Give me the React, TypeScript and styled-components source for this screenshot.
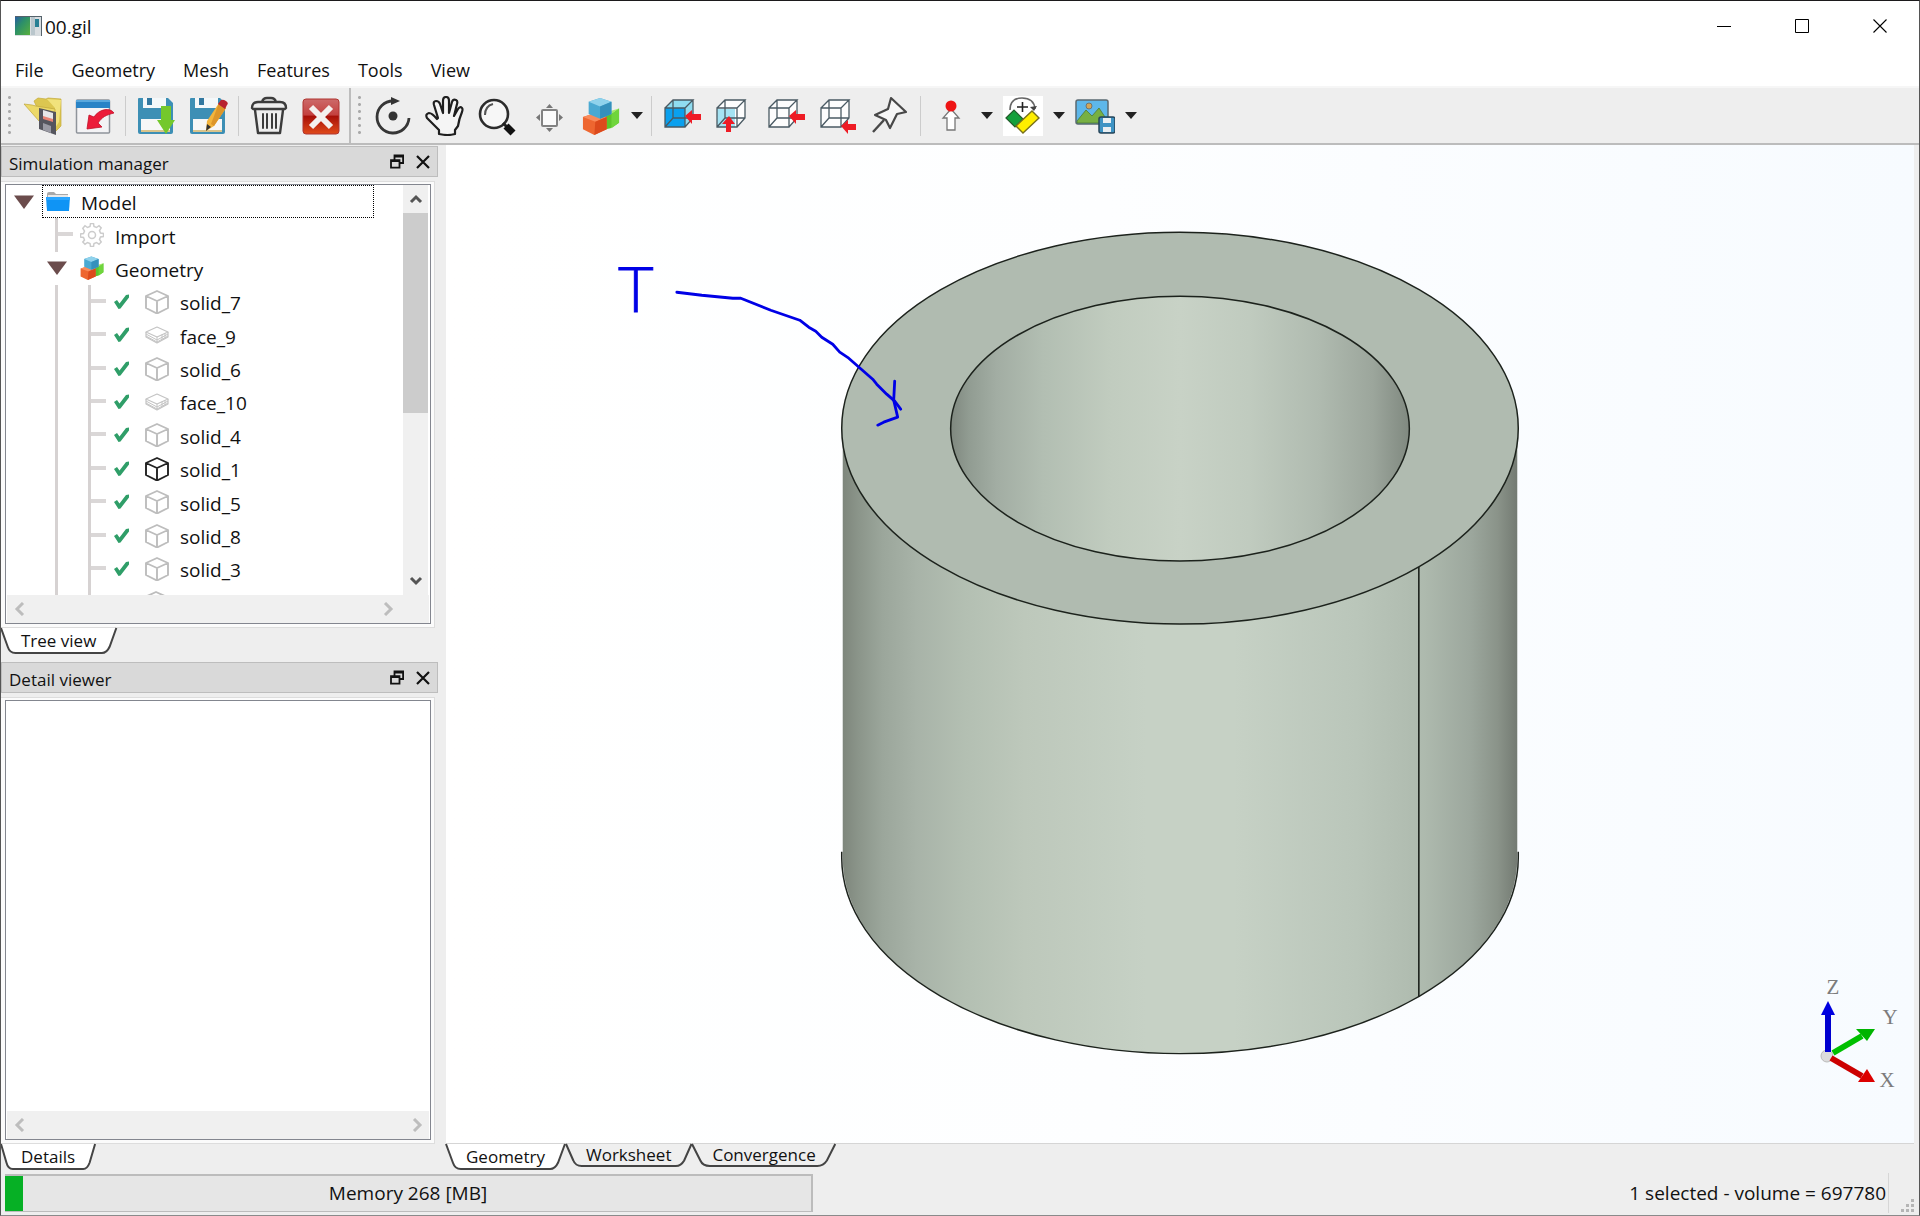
import React from "react";
import styled, { createGlobalStyle, css } from "styled-components";

const GlobalStyle = createGlobalStyle`
  *, *::before, *::after { box-sizing: border-box; }
  body {
    margin: 0;
    background: #eeeeee;
    color: #111111;
    font-family: "Open Sans", "Noto Sans", sans-serif;
    font-size: 19px;
    line-height: 24px;
  }
  button { font: inherit; color: inherit; }
  svg { display: block; }
`;

/* ---------- window frame ---------- */

const Window = styled.div`
  display: flex;
  flex-direction: column;
  height: 100vh;
  border: 1px solid #555555;
  border-top-color: #1c1a1c;
  border-bottom-color: #8a8a8a;
  overflow: hidden;
`;

const TitleBar = styled.header`
  display: flex;
  align-items: center;
  height: 50px;
  flex: none;
  padding-left: 14px;
  background: #ffffff;
`;

const WindowTitle = styled.h1`
  flex: 1;
  margin: 0;
  padding: 2px 0 0 3px;
  font-size: 19px;
  font-weight: 400;
  line-height: 24px;
`;

const BareButton = styled.button`
  display: flex;
  align-items: center;
  justify-content: center;
  padding: 0;
  border: 0;
  background: transparent;
`;

const WindowControl = styled(BareButton)`
  width: 78px;
  height: 48px;
`;

const MenuBar = styled.nav`
  display: flex;
  align-items: center;
  gap: 28px;
  height: 37px;
  flex: none;
  padding: 2px 14px 0;
  background: #ffffff;
  border-bottom: 2px solid #f6f6f6;
`;

const MenuButton = styled(BareButton)`
  font-size: 18px;
  line-height: 24px;
`;

/* ---------- toolbar ---------- */

const ToolBars = styled.div`
  display: flex;
  height: 57px;
  flex: none;
  background: #eeeeee;
  border-bottom: 2px solid #bcbcbc;
`;

const ToolGroup = styled.div<{ $divided?: boolean }>`
  display: flex;
  align-items: center;
  padding-left: 16px;
  position: relative;
  ${(p) => p.$divided && css`border-right: 2px solid #bdbdbd; padding-right: 2px;`}
  &::before {
    content: "";
    position: absolute;
    left: 7px;
    top: 6px;
    bottom: 5px;
    width: 3px;
    background: radial-gradient(circle, #aaaaaa 1px, transparent 2px) 0 0 / 3px 7px;
  }
`;

const ToolButton = styled(BareButton)`
  width: 52px;
  height: 48px;
`;

const DropButton = styled(BareButton)`
  width: 20px;
  height: 48px;
`;

const ToolSeparator = styled.span`
  width: 1px;
  height: 40px;
  margin: 0 4px;
  background: #cccccc;
`;

/* ---------- docks ---------- */

const Workspace = styled.main`
  display: flex;
  flex: 1;
  min-height: 0;
`;

const DockColumn = styled.aside`
  display: flex;
  flex-direction: column;
  width: 437px;
  flex: none;
  padding-top: 1px;
`;

const Dock = styled.section<{ $fill?: boolean }>`
  display: flex;
  flex-direction: column;
  ${(p) => (p.$fill ? css`flex: 1; min-height: 0;` : css`height: 508px; flex: none; margin-bottom: 8px;`)}
`;

const DockHeader = styled.header`
  display: flex;
  align-items: center;
  height: 31px;
  flex: none;
  padding: 0 1px 0 7px;
  background: #d9d9d9;
  border: 1px solid #bdbdbd;
`;

const DockTitle = styled.h2`
  flex: 1;
  margin: 0;
  padding-top: 4px;
  font-size: 17px;
  font-weight: 400;
  line-height: 24px;
`;

const DockAction = styled(BareButton)`
  width: 26px;
  height: 28px;
`;

const DockBody = styled.div`
  display: flex;
  flex: 1;
  min-height: 0;
  margin: 4px 3px 0 0;
  padding: 2px 3px 3px 4px;
  background: #fbfbfb;
  border: solid #dddddd;
  border-width: 1px 1px 1px 0;
`;

const ScrollFrame = styled.div`
  display: flex;
  flex-direction: column;
  flex: 1;
  min-width: 0;
  background: #ffffff;
  border: 1px solid #83868f;
`;

const ScrollRow = styled.div`
  display: flex;
  flex: 1;
  min-height: 0;
`;

const VerticalBar = styled.div`
  display: flex;
  flex-direction: column;
  width: 25px;
  margin-right: 2px;
  background: #f0f0f0;
`;

const VerticalThumb = styled.div`
  height: 200px;
  background: #cccccc;
`;

const Spacer = styled.div`
  flex: 1;
`;

const ArrowButton = styled(BareButton)`
  width: 25px;
  height: 28px;
  flex: none;
`;

const HorizontalBar = styled.div<{ $corner?: boolean }>`
  display: flex;
  align-items: center;
  justify-content: space-between;
  height: 28px;
  flex: none;
  margin: 0 1px;
  padding-right: ${(p) => (p.$corner ? "29px" : "0")};
  background: #f0f0f0;
`;

/* ---------- tabs ---------- */

const TabStrip = styled.div`
  display: flex;
  align-items: flex-start;
  gap: 1px;
  height: 26px;
  flex: none;
`;

const Tab = styled.button<{ $active?: boolean }>`
  position: relative;
  isolation: isolate;
  padding: 0 20px;
  border: 0;
  background: transparent;
  font-size: 17px;
  line-height: ${(p) => (p.$active ? "25px" : "22px")};
  & > svg {
    position: absolute;
    inset: 0;
    z-index: -1;
    width: 100%;
    height: 100%;
    overflow: visible;
  }
`;

/* ---------- tree ---------- */

const Tree = styled.ul`
  flex: 1;
  min-width: 0;
  margin: 0;
  padding: 0 0 0 1px;
  overflow: hidden;
  list-style: none;
`;

const TreeRows = styled.div`
  display: grid;
  grid-auto-rows: 1fr;
  height: 434px;
`;

const TreeRow = styled.li`
  display: flex;
  align-items: stretch;
`;

const Branch = styled.span<{ $line?: boolean; $stub?: boolean }>`
  position: relative;
  display: flex;
  align-items: center;
  justify-content: center;
  width: 33px;
  flex: none;
  ${(p) =>
    p.$line &&
    css`
      background: linear-gradient(#d6d2d2, #d6d2d2) 15px 0 / 3px 100% no-repeat;
    `}
  ${(p) =>
    p.$stub &&
    css`
      &::after {
        content: "";
        width: 15px;
        height: 4px;
        margin-left: 18px;
        margin-bottom: 2px;
        background: #dad7d7;
      }
    `}
`;

const NodeLabel = styled.span<{ $focused?: boolean }>`
  display: flex;
  align-items: center;
  gap: 11px;
  margin-left: 3px;
  padding: 0 3px;
  border: 1px dotted transparent;
  ${(p) => p.$focused && css`width: 332px; margin-left: 2px; border-color: #000000;`}
`;

const LeafLabel = styled.span`
  display: flex;
  align-items: center;
  padding-left: 8px;
  & > svg + svg { margin-left: 16px; }
  & > span { margin-left: 11px; }
`;

const PeekLabel = styled.span`
  padding: 5px 0 0 38px;
`;

const NodeText = styled.span`
  padding-top: 3px;
  font-size: 19px;
  line-height: 24px;
`;

/* ---------- viewport ---------- */

const ViewColumn = styled.section`
  display: flex;
  flex-direction: column;
  flex: 1;
  min-width: 0;
  margin-left: 8px;
  padding-right: 5px;
`;

const Viewport = styled.div`
  position: relative;
  flex: 1;
  min-height: 0;
  background: linear-gradient(90deg, #ffffff 0%, #fdfeff 45%, #f7fbff 100%);
  border-bottom: 1px solid #d5d5d5;
`;

const Scene = styled.svg`
  width: 100%;
  height: 100%;
`;

const Triad = styled.svg`
  position: absolute;
  right: 0;
  bottom: 0;
`;

/* ---------- status bar ---------- */

const StatusBar = styled.footer`
  display: grid;
  grid-template-columns: 11fr 15fr;
  align-items: center;
  height: 45px;
  flex: none;
  padding: 0 4px;
`;

const MemoryBar = styled.div`
  position: relative;
  display: flex;
  align-items: center;
  justify-content: center;
  height: 38px;
  background: #e6e6e6;
  border: 1px solid #bcbcbc;
  border-width: 2px 2px 1px 0;
`;

const MemoryFill = styled.span`
  position: absolute;
  left: 0;
  top: 0;
  bottom: 0;
  background: #06b025;
`;

const StatusInfo = styled.div`
  display: flex;
  align-items: center;
  justify-content: flex-end;
  height: 40px;
  gap: 12px;
`;

const Selection = styled.output`
  padding-right: 2px;
  line-height: 40px;
  border-right: 1px solid #d6d6d6;
`;

const GripHolder = styled.span`
  align-self: flex-end;
`;

/* ---------- small drawings ---------- */

const AppIcon = () => (
  <svg width="27" height="20" viewBox="0 0 27 20" aria-hidden="true">
    <defs>
      <linearGradient id="appg" x1="0" y1="0" x2="1" y2="1">
        <stop offset="0" stopColor="#2b5ca0" />
        <stop offset="0.4" stopColor="#2c8f6a" />
        <stop offset="1" stopColor="#58b03c" />
      </linearGradient>
    </defs>
    <rect width="27" height="20" fill="#d8dde0" />
    <rect y="1" width="15" height="18" fill="url(#appg)" />
    <path d="M16 1h4v18h-4z" fill="#b9c6cc" />
    <path d="M20 3h4v8h-4z" fill="#287f93" />
    <path d="M0 .5h27M26.500 0v20" stroke="#55626b" />
  </svg>
);

const MinimizeGlyph = () => (
  <svg width="14" height="14" viewBox="0 0 14 14"><path d="M0 7.500h14" stroke="#000" /></svg>
);
const MaximizeGlyph = () => (
  <svg width="14" height="14" viewBox="0 0 14 14"><path d="M.5.5h13v13H.5z" fill="none" stroke="#000" /></svg>
);
const CloseGlyph = () => (
  <svg width="14" height="14" viewBox="0 0 14 14"><path d="M.5.5l13 13M13.500.5l-13 13" stroke="#000" strokeWidth="1.100" /></svg>
);

const FloatGlyph = () => (
  <svg width="14" height="15" viewBox="0 0 14 15" fill="none" stroke="#111" strokeWidth="1.800">
    <path d="M4.500 6V1.500h8.600v7.500H9.500M4.500 2.500h8.600M1 6.200h8.500v7.500H1zM1 7.200h8.500" />
  </svg>
);
const DockCloseGlyph = () => (
  <svg width="14" height="14" viewBox="0 0 14 14"><path d="M1 1l12 12M13 1L1 13" stroke="#111" strokeWidth="2.200" /></svg>
);

const paths = {
  up: "M2 10l5-5 5 5",
  down: "M2 4l5 5 5-5",
  left: "M10 1L4 7l6 6",
  right: "M4 1l6 6-6 6",
};
const Chevron = ({ dir, color }: { dir: keyof typeof paths; color: string }) => (
  <svg width="14" height="14" viewBox="0 0 14 14">
    <path d={paths[dir]} fill="none" stroke={color} strokeWidth="3" />
  </svg>
);

const DropGlyph = () => (
  <svg width="12" height="8" viewBox="0 0 12 8"><path d="M0 0h12L6 7z" fill="#222" /></svg>
);

const Expander = () => (
  <svg width="20" height="14" viewBox="0 0 20 14"><path d="M0 .5h20L10 14z" fill="#6b4c4c" /></svg>
);

const FolderIcon = () => (
  <svg width="24" height="22" viewBox="0 0 24 22">
    <path d="M1 3q0-2 2-2h5l2 2h12v5H1z" fill="#a9a9a9" />
    <path d="M2 4h20v4H2z" fill="#e8e8e8" />
    <path d="M0 6h24l-1 14H1z" fill="#0f94f5" />
    <path d="M0 6h24l-.3 3H.3z" fill="#2aa6ff" />
  </svg>
);

const GearIcon = () => (
  <svg width="24" height="24" viewBox="0 0 24 24" fill="none" stroke="#cccccc" strokeWidth="1.500">
    <path d="M10 3.500l.5-3h3l.5 3 2.500 1 2.500-1.800 2.200 2.200-1.700 2.600 1 2.500 3 .5v3l-3 .5-1 2.500 1.700 2.500-2.200 2.200-2.500-1.700-2.500 1-.5 3h-3l-.5-3-2.500-1-2.500 1.700-2.200-2.200L4.500 17l-1-2.500-3-.5v-3l3-.5 1-2.500-1.700-2.600L5 2.700l2.500 1.800z" />
    <circle cx="12" cy="12" r="3.500" />
  </svg>
);

const BlocksIcon = ({ size }: { size: number }) => (
  <svg width={size} height={size} viewBox="0 0 40 40">
    <path d="M20 20l12-3 7-5v15l-9 6-10 2z" fill="#5cc52c" />
    <path d="M20 20l9-5 10-3-8 6z" fill="#a5ea6a" />
    <path d="M31 18l8-6v15l-8 6z" fill="#6fd53c" />
    <path d="M1 21l12-4 13 4v13l-13 6-12-6z" fill="#ee6630" />
    <path d="M1 21l12-4 13 4-12 5z" fill="#f98b5b" />
    <path d="M14 26l12-5v13l-13 6z" fill="#dc4a1c" />
    <path d="M7 5l12-4 12 4v13l-12 5-12-5z" fill="#4aa9d2" />
    <path d="M7 5l12-4 12 4-12 5z" fill="#8fd2ec" />
    <path d="M19 10l12-5v13l-12 5z" fill="#3590bc" />
  </svg>
);

const TickIcon = () => (
  <svg width="15" height="16" viewBox="0 0 15 16">
    <path d="M0 8l3-2 2.500 3.500L12 1l3-.5v3L6.500 14.500l-2 .5z" fill="#2f9e68" />
  </svg>
);

const SolidIcon = ({ dark }: { dark?: boolean }) => (
  <svg width="24" height="24" viewBox="0 0 24 24" fill="none" stroke={dark ? "#222" : "#bdbdbd"} strokeWidth="1.900" strokeLinejoin="round">
    <path d="M12 1l11 5v12l-11 5.500L1 18V6zM1 6l11 5 11-5M12 11v12.500" />
  </svg>
);

const FaceIcon = () => (
  <svg width="24" height="24" viewBox="0 0 24 24" fill="none" stroke="#c4c4c4" strokeWidth="1.200" strokeLinejoin="round">
    <path d="M12 4l11 5-11 5L1 9z" />
    <path d="M1 9v5l11 6 11-6V9" />
    <path d="M1 11l11 6 11-6M1 13l11 6 11-6M12 14v6M17 11.500v5M20 10.500v5" strokeWidth="1" />
  </svg>
);

const Icon = ({ children }: { children: React.ReactNode }) => (
  <svg width="40" height="40" viewBox="0 0 40 40" aria-hidden="true">{children}</svg>
);

const OpenIcon = () => (
  <Icon>
    <path d="M11 5l4-3 8 1 2-1 13 1v27l-6 6-16-20z" fill="#dcc650" stroke="#c4ab3a" strokeWidth=".7" />
    <path d="M24 3l14 1-2 22-4 6V12z" fill="#f1e27c" />
    <path d="M1 8l8 1 4 1 19 3v12l-16 0z" fill="#ecd968" stroke="#bfa53a" strokeWidth=".7" />
    <path d="M16 12l17 4v23l-17-6z" fill="#55555e" />
    <path d="M20 14l10 3v8l-10-3z" fill="#e6e6e8" />
    <path d="M20 20l10 3v3l-10-3z" fill="#e78374" />
    <path d="M20 27l8 3v7l-8-3z" fill="#9a9aa4" />
  </Icon>
);

const ImportIcon = () => (
  <Icon>
    <rect x="1.500" y="4" width="33" height="33" rx="1" fill="#f3f3f5" stroke="#8f949b" strokeWidth="1.500" />
    <path d="M1 4h34v8H1z" fill="#2883c6" />
    <path d="M1 4h34v2H1z" fill="#59a8dd" />
    <path d="M39 17c-4-6-15-4-20 4l-5-2-2 14 15-2-4-4c4-6 8-8 16-10z" fill="#ec1c3a" stroke="#c01028" strokeWidth=".8" />
  </Icon>
);

const FloppyBase = () => (
  <>
    <path d="M2 3q0-1 1-1h29l5 5v29q0 2-2 2H4q-2 0-2-2z" fill="#3d8fb5" />
    <path d="M7 2h23v10H7z" fill="#f4f8fa" />
    <path d="M11 2h5v7h-5z" fill="#3278a0" />
    <path d="M5 23h29v12H5z" fill="#f7f7f7" />
    <path d="M5 34h29v2H5z" fill="#d9c48c" />
  </>
);
const SaveIcon = () => (
  <Icon>
    <FloppyBase />
    <path d="M25 10h10v14h4l-9 14-9-14h4z" fill="#74c82c" />
  </Icon>
);
const SaveAsIcon = () => (
  <Icon>
    <FloppyBase />
    <path d="M19 25l12-18 7 5-12 18-8 5z" fill="#f3b43c" />
    <path d="M31 7l7 5-12 18-3-2z" fill="#dd962a" />
    <path d="M30 8l3-4q2-1 5 1t1 4l-2 4z" fill="#b8232f" />
    <path d="M19 28l4 3-5 4z" fill="#333" />
  </Icon>
);
const TrashIcon = () => (
  <Icon>
    <g fill="none" stroke="#3c3c3c" strokeWidth="2.400" strokeLinejoin="round" strokeLinecap="round">
      <path d="M3 12q0-6 6-6h22q6 0 6 6l-1 1H4zM13 6q1-4 5-4h4q4 0 5 4M6 14l3 23h22l3-23" />
      <path d="M14 18v14M18 18v14M23 18v14M27 18v14" strokeWidth="2" />
    </g>
  </Icon>
);
const DeleteIcon = () => (
  <Icon>
    <defs>
      <linearGradient id="delg" x1="0" y1="0" x2="0" y2="1">
        <stop offset="0" stopColor="#cc6a6a" />
        <stop offset="0.45" stopColor="#c4413f" />
        <stop offset="0.5" stopColor="#a81008" />
        <stop offset="1" stopColor="#e04a1a" />
      </linearGradient>
    </defs>
    <rect x="2" y="3" width="36" height="35" rx="3" fill="url(#delg)" stroke="#b03530" />
    <path d="M10 11l20 20M30 11L10 31" stroke="#f4f0ee" strokeWidth="6" />
  </Icon>
);
const RotateIcon = () => (
  <Icon>
    <path d="M20 5A16 16 0 1 0 36 22" fill="none" stroke="#363636" strokeWidth="2.800" />
    <path d="M18 1l9 4-9 4z" fill="#333" />
    <circle cx="20" cy="20" r="4.500" fill="#333" />
  </Icon>
);
const PanIcon = () => (
  <Icon>
    <path
      d="M14 38v-4L2 22q-2-4 2-5 3 0 8 6l1-1L9 9q-1-4 2-4 3 0 4 3l3 9V5q0-4 3-4t3 4v12l3-11q1-3 4-2 2 1 1 4l-3 12 4-7q2-3 4-1 1 1 0 4-3 7-4 14l-3 4v4q-7 2-16 0z"
      fill="#fff" fillOpacity=".4" stroke="#1f1f1f" strokeWidth="2.200" strokeLinejoin="round"
    />
  </Icon>
);
const ZoomIcon = () => (
  <Icon>
    <circle cx="17" cy="18" r="14" fill="#f7f7f7" stroke="#2c2c2c" strokeWidth="2.600" />
    <path d="M8 19q0-9 8-11" fill="none" stroke="#555" strokeWidth="2" />
    <path d="M26 27l4 4" stroke="#222" strokeWidth="3" />
    <path d="M29 30l7 7" stroke="#111" strokeWidth="7" />
  </Icon>
);
const FitIcon = () => (
  <Icon>
    <rect x="13" y="14" width="15" height="16" rx="1" fill="#fbfbfb" stroke="#838383" strokeWidth="2" />
    <path d="M17 12l3.500-4 3.500 4zM17 32l3.500 4 3.500-4zM11 18l-4 3.500 4 3.500zM30 18l4 3.500-4 3.500z" fill="#777" />
  </Icon>
);

type WireProps = { fill?: string; top?: string; floor?: boolean; arrow: "side" | "below" | "corner" };
const WireCube = ({ fill = "none", top = "#fdfdfd", floor, arrow }: WireProps) => (
  <svg width="40" height="40" viewBox="-1 0 40 40" aria-hidden="true">
    <path d="M2 12l8-8h20v18l-8 9H2z" fill={top} />
    <path d="M2 12h20v19H2z" fill={fill} />
    {floor && <path d="M2 31V13h18v18z" fill="#8fdcf0" opacity=".8" />}
    <g fill="none" stroke="#4a5a63" strokeWidth="1.300">
      <path d="M2 12h20v19H2zM2 12l8-8h20l-8 8M30 4v18l-8 9M10 4v18h20M10 22l-8 9" />
    </g>
    {arrow === "side" && <path d="M22 20l7-6v4h9v6h-9v4z" fill="#ee1c25" />}
    {arrow === "below" && <path d="M14 20l6 8h-4v8h-5v-8H7z" fill="#ee1c25" />}
    {arrow === "corner" && <path d="M22 30l7-6v4h8v6h-8v4z" fill="#ee1c25" />}
  </svg>
);

const PinIcon = () => (
  <Icon>
    <path d="M21 2l15 14-9 2-7 14-4-8-11-5 13-6z" fill="#f6f6f6" stroke="#484848" strokeWidth="2.200" strokeLinejoin="round" />
    <path d="M14 24L3 36" stroke="#484848" strokeWidth="2.400" />
  </Icon>
);
const ProbeIcon = () => (
  <Icon>
    <path d="M20 13l8 9h-4v12h-8V22h-4z" fill="#fff" stroke="#777" strokeWidth="1.300" />
    <circle cx="20" cy="10" r="5.500" fill="#ee1414" />
  </Icon>
);
const PlaneIcon = () => (
  <Icon>
    <rect width="40" height="40" fill="#fff" />
    <path d="M7 14q0-12 12-12t13 11" fill="none" stroke="#666" strokeWidth="1.600" />
    <path d="M27 11l7-1-3 5z" fill="#444" />
    <path d="M3 22l8-8 9 9-8 8z" fill="#14a03c" stroke="#245c2c" strokeWidth="1.200" />
    <path d="M13 30l16-15 7 7-16 15z" fill="#ffee00" stroke="#77701c" strokeWidth="1.400" />
    <path d="M14 11h11M19.500 6v10" stroke="#222" strokeWidth="1.600" />
  </Icon>
);
const SnapshotIcon = () => (
  <Icon>
    <rect x="1" y="4" width="32" height="24" rx="2" fill="#5db7ea" stroke="#5a6a72" strokeWidth="1.500" />
    <path d="M2 25l9-11 6 6 7-8 8 12v3H2z" fill="#77b043" stroke="#4e7a35" strokeWidth=".8" />
    <circle cx="14" cy="10" r="3" fill="#d2a65a" stroke="#666" strokeWidth=".8" />
    <rect x="24" y="21" width="16" height="16" rx="2" fill="#3d93c4" stroke="#27465a" strokeWidth="1.500" />
    <path d="M28 22h8v5h-8zM28 31h8v5h-8z" fill="#e8eef2" />
  </Icon>
);

const GripGlyph = () => (
  <svg width="14" height="14" viewBox="0 0 14 14" fill="#b5b5b5">
    <path d="M10 0h3v3h-3zM10 5h3v3h-3zM5 5h3v3H5zM10 10h3v3h-3zM5 10h3v3H5zM0 10h3v3H0z" />
  </svg>
);

const TabShape = ({ active }: { active?: boolean }) => (
  <svg viewBox="0 0 120 24" preserveAspectRatio="none" aria-hidden="true">
    <path
      d="M0 0l7 18q2 6 8 6h90q5 0 8-6L120 0"
      fill={active ? "#ffffff" : "#efefef"}
      stroke="#444"
      strokeWidth="2"
      vectorEffect="non-scaling-stroke"
    />
  </svg>
);

/* ---------- data ---------- */

const menus = ["File", "Geometry", "Mesh", "Features", "Tools", "View"];
const leaves = ["solid_7", "face_9", "solid_6", "face_10", "solid_4", "solid_1", "solid_5", "solid_8", "solid_3"];

const Tool = ({ label, children }: { label: string; children: React.ReactNode }) => (
  <ToolButton type="button" aria-label={label}>{children}</ToolButton>
);
const Drop = ({ label }: { label: string }) => (
  <DropButton type="button" aria-label={label}><DropGlyph /></DropButton>
);

const DockTop = ({ title }: { title: string }) => (
  <DockHeader>
    <DockTitle>{title}</DockTitle>
    <DockAction type="button" aria-label="Float"><FloatGlyph /></DockAction>
    <DockAction type="button" aria-label="Close"><DockCloseGlyph /></DockAction>
  </DockHeader>
);

const HScroll = ({ corner }: { corner?: boolean }) => (
  <HorizontalBar $corner={corner}>
    <ArrowButton type="button" aria-label="Scroll left"><Chevron dir="left" color="#bdbdbd" /></ArrowButton>
    <ArrowButton type="button" aria-label="Scroll right"><Chevron dir="right" color="#bdbdbd" /></ArrowButton>
  </HorizontalBar>
);

const CylinderScene = () => (
  <Scene viewBox="446 145 1469 998" role="img" aria-label="Hollow cylinder">
    <defs>
      <linearGradient id="outer" gradientUnits="userSpaceOnUse" x1="842" y1="0" x2="1519" y2="0">
        <stop offset="0" stopColor="#7d857b" />
        <stop offset="0.025" stopColor="#8b958a" />
        <stop offset="0.06" stopColor="#9ba69b" />
        <stop offset="0.11" stopColor="#a8b3a8" />
        <stop offset="0.18" stopColor="#b3bfb2" />
        <stop offset="0.27" stopColor="#bdc8bb" />
        <stop offset="0.45" stopColor="#c6d1c5" />
        <stop offset="0.58" stopColor="#c6d1c5" />
        <stop offset="0.76" stopColor="#bac6ba" />
        <stop offset="0.86" stopColor="#aebaae" />
        <stop offset="0.93" stopColor="#9ca79d" />
        <stop offset="0.97" stopColor="#8a9389" />
        <stop offset="1" stopColor="#727971" />
      </linearGradient>
      <linearGradient id="inner" gradientUnits="userSpaceOnUse" x1="951" y1="0" x2="1410" y2="0">
        <stop offset="0" stopColor="#7f887f" />
        <stop offset="0.04" stopColor="#919c92" />
        <stop offset="0.1" stopColor="#a2ada3" />
        <stop offset="0.2" stopColor="#b2beb2" />
        <stop offset="0.35" stopColor="#c1ccbf" />
        <stop offset="0.5" stopColor="#c8d2c6" />
        <stop offset="0.65" stopColor="#c0cbbf" />
        <stop offset="0.8" stopColor="#b0bbb0" />
        <stop offset="0.92" stopColor="#9ca69c" />
        <stop offset="1" stopColor="#808980" />
      </linearGradient>
    </defs>
    <path d="M843 428V858A337.500 196 0 0 0 1518 858V428z" fill="url(#outer)" />
    <path d="M842 852v6A338.500 196 0 0 0 1519 858v-6" fill="none" stroke="#1c221c" strokeWidth="1.500" />
    <ellipse cx="1180.500" cy="428" rx="338.500" ry="196" fill="#b0bbb0" stroke="#1c221c" strokeWidth="1.500" />
    <ellipse cx="1180.500" cy="428.500" rx="229.500" ry="132.500" fill="url(#inner)" stroke="#1c221c" strokeWidth="1.500" />
    <path d="M1419.500 567V997" stroke="#1c221c" strokeWidth="1.600" />
    <text x="636" y="312" textAnchor="middle" fontFamily="'DejaVu Sans Light', 'DejaVu Sans', sans-serif" fontSize="60" fontWeight="200" fill="#0000e6" stroke="#0000e6">T</text>
    <g fill="none" stroke="#0000e6" strokeWidth="2.800" strokeLinejoin="round" strokeLinecap="round">
      <path d="M677 292l25 3 31 3 8 0 30 12 29 10 9 7 7 4 6 6 11 7 7 8 9 6 24 21 4 5 10 10 8 7 6 8" />
      <path d="M895 381l-1 19 4 17-14 5-6 3" />
    </g>
  </Scene>
);

const AxisTriad = () => (
  <Triad width="120" height="180" viewBox="0 0 120 180" aria-label="Axes">
    <circle cx="33" cy="93" r="6" fill="#dcdcdc" stroke="#bbbbbb" />
    <path d="M34 89V50" stroke="#0000d0" strokeWidth="6" />
    <path d="M34 38l7 14H27z" fill="#0000e0" />
    <path d="M39 90l29-17" stroke="#00c000" strokeWidth="6" />
    <path d="M81 66l-8 12-11-12z" fill="#00b400" />
    <path d="M37 95l31 18" stroke="#cc0000" strokeWidth="6" />
    <path d="M81 119l-17 0 9-13z" fill="#dc0000" />
    <g fontFamily="'Liberation Serif', serif" fontSize="21" fill="#7c7c7c" textAnchor="middle">
      <text x="39" y="31">Z</text>
      <text x="96" y="61">Y</text>
      <text x="93" y="124">X</text>
    </g>
  </Triad>
);

export default function App() {
  const memoryUsed = 18 / 808;
  return (
    <Window>
      <GlobalStyle />
      <TitleBar>
        <AppIcon />
        <WindowTitle>00.gil</WindowTitle>
        <WindowControl type="button" aria-label="Minimize"><MinimizeGlyph /></WindowControl>
        <WindowControl type="button" aria-label="Maximize"><MaximizeGlyph /></WindowControl>
        <WindowControl type="button" aria-label="Close"><CloseGlyph /></WindowControl>
      </TitleBar>
      <MenuBar>
        {menus.map((m) => <MenuButton type="button" key={m}>{m}</MenuButton>)}
      </MenuBar>
      <ToolBars>
        <ToolGroup $divided>
          <Tool label="Open"><OpenIcon /></Tool>
          <Tool label="Import"><ImportIcon /></Tool>
          <ToolSeparator />
          <Tool label="Save"><SaveIcon /></Tool>
          <Tool label="Save as"><SaveAsIcon /></Tool>
          <ToolSeparator />
          <Tool label="Clear"><TrashIcon /></Tool>
          <Tool label="Delete"><DeleteIcon /></Tool>
        </ToolGroup>
        <ToolGroup>
          <Tool label="Rotate"><RotateIcon /></Tool>
          <Tool label="Pan"><PanIcon /></Tool>
          <Tool label="Zoom"><ZoomIcon /></Tool>
          <Tool label="Fit all"><FitIcon /></Tool>
          <Tool label="Display"><BlocksIcon size={38} /></Tool>
          <Drop label="Display options" />
          <ToolSeparator />
          <Tool label="Select solid"><WireCube fill="#0aa0ee" top="#8fdcf0" arrow="side" /></Tool>
          <Tool label="Select face"><WireCube floor arrow="below" /></Tool>
          <Tool label="Select edge"><WireCube arrow="side" /></Tool>
          <Tool label="Select vertex"><WireCube arrow="corner" /></Tool>
          <Tool label="Pin"><PinIcon /></Tool>
          <ToolSeparator />
          <Tool label="Probe"><ProbeIcon /></Tool>
          <Drop label="Probe options" />
          <Tool label="Clip plane"><PlaneIcon /></Tool>
          <Drop label="Clip plane options" />
          <Tool label="Snapshot"><SnapshotIcon /></Tool>
          <Drop label="Snapshot options" />
        </ToolGroup>
      </ToolBars>
      <Workspace>
        <DockColumn>
          <Dock>
            <DockTop title="Simulation manager" />
            <DockBody>
              <ScrollFrame>
                <ScrollRow>
                  <Tree role="tree">
                    <TreeRows role="group">
                      <TreeRow role="treeitem">
                        <Branch><Expander /></Branch>
                        <NodeLabel $focused><FolderIcon /><NodeText>Model</NodeText></NodeLabel>
                      </TreeRow>
                      <TreeRow role="treeitem">
                        <Branch />
                        <Branch $line $stub />
                        <NodeLabel><GearIcon /><NodeText>Import</NodeText></NodeLabel>
                      </TreeRow>
                      <TreeRow role="treeitem">
                        <Branch />
                        <Branch><Expander /></Branch>
                        <NodeLabel><BlocksIcon size={24} /><NodeText>Geometry</NodeText></NodeLabel>
                      </TreeRow>
                      {leaves.map((name) => (
                        <TreeRow role="treeitem" key={name}>
                          <Branch />
                          <Branch $line />
                          <Branch $line $stub />
                          <LeafLabel>
                            <TickIcon />
                            {name.startsWith("face") ? <FaceIcon /> : <SolidIcon dark={name === "solid_1"} />}
                            <NodeText>{name}</NodeText>
                          </LeafLabel>
                        </TreeRow>
                      ))}
                      <TreeRow role="treeitem">
                        <Branch />
                        <Branch $line />
                        <Branch $line />
                        <PeekLabel><SolidIcon /></PeekLabel>
                      </TreeRow>
                    </TreeRows>
                  </Tree>
                  <VerticalBar>
                    <ArrowButton type="button" aria-label="Scroll up"><Chevron dir="up" color="#555" /></ArrowButton>
                    <VerticalThumb />
                    <Spacer />
                    <ArrowButton type="button" aria-label="Scroll down"><Chevron dir="down" color="#555" /></ArrowButton>
                  </VerticalBar>
                </ScrollRow>
                <HScroll corner />
              </ScrollFrame>
            </DockBody>
            <TabStrip>
              <Tab type="button" $active><TabShape active />Tree view</Tab>
            </TabStrip>
          </Dock>
          <Dock $fill>
            <DockTop title="Detail viewer" />
            <DockBody>
              <ScrollFrame>
                <ScrollRow />
                <HScroll />
              </ScrollFrame>
            </DockBody>
            <TabStrip>
              <Tab type="button" $active><TabShape active />Details</Tab>
            </TabStrip>
          </Dock>
        </DockColumn>
        <ViewColumn>
          <Viewport>
            <CylinderScene />
            <AxisTriad />
          </Viewport>
          <TabStrip>
            <Tab type="button" $active><TabShape active />Geometry</Tab>
            <Tab type="button"><TabShape />Worksheet</Tab>
            <Tab type="button"><TabShape />Convergence</Tab>
          </TabStrip>
        </ViewColumn>
      </Workspace>
      <StatusBar>
        <MemoryBar role="progressbar" aria-label="Memory">
          <MemoryFill style={{ width: `${memoryUsed * 100}%` }} />
          Memory 268 [MB]
        </MemoryBar>
        <StatusInfo>
          <Selection>1 selected - volume = 697780</Selection>
          <GripHolder><GripGlyph /></GripHolder>
        </StatusInfo>
      </StatusBar>
    </Window>
  );
}
